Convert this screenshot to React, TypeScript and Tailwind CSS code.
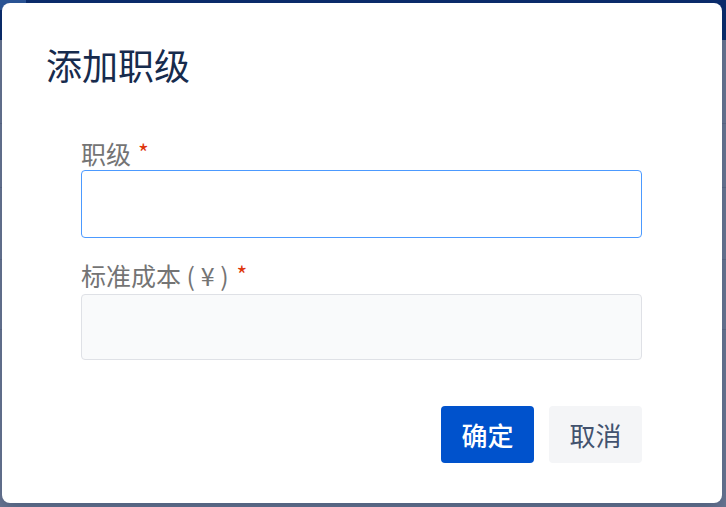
import React from "react";

const font = { fontFamily: '"Noto Sans CJK SC", "Noto Sans", sans-serif' };

export default function App() {
  return (
    <div className="relative h-[507px] w-[726px] overflow-hidden bg-[#6b7793]" style={font}>
      {/* page behind the overlay */}
      <div className="flex h-[40px] bg-[#0b2c6c]">
        <div className="h-[10px] w-[26px] bg-[#2b5596]" />
      </div>
      <div className="flex flex-col">
        <div className="h-[84px] border-b border-[#5f6b87]" />
        <div className="h-[64px] border-b border-[#5f6b87]" />
        <div className="h-[72px] border-b border-[#5f6b87]" />
        <div className="h-[70px] border-b border-[#5f6b87]" />
      </div>

      {/* modal */}
      <div className="absolute left-[2px] top-[3px] flex h-[500px] w-[720px] flex-col rounded-[8px] bg-white shadow-[0_8px_16px_rgba(9,30,66,0.25)]">
        <h1 className="ml-[44px] mt-[36px] text-[36px] font-normal leading-[50px] text-[#172b4d]">添加职级</h1>

        <form className="ml-[79px] mt-[48px] flex w-[561px] flex-col">
          <label className="flex items-start text-[25px] leading-[32px] text-[#747474]">
            职级
            <span className="ml-[7px] text-[23px] leading-[30px] text-[#de350b]">*</span>
          </label>
          <input
            className="mt-[1px] h-[68px] w-full rounded-[4px] border border-[#4c9aff] bg-white px-3 text-[20px] outline-none"
            autoFocus
          />

          <label className="mt-[21px] flex items-start whitespace-pre text-[25px] leading-[32px] text-[#747474]">
            {"标准成本 ( ¥ )"}
            <span className="ml-[8px] text-[23px] leading-[30px] text-[#de350b]">*</span>
          </label>
          <input className="mt-[3px] h-[66px] w-full rounded-[4px] border border-[#dfe1e6] bg-[#f9fafb] px-3 text-[20px] outline-none" />

          <div className="mt-[46px] flex justify-end gap-[15px]">
            <button
              type="button"
              className="h-[57px] w-[93px] rounded-[4px] bg-[#0052cc] text-[26px] font-medium text-white"
            >
              确定
            </button>
            <button
              type="button"
              className="h-[57px] w-[93px] rounded-[4px] bg-[#f4f5f7] text-[26px] text-[#42526e]"
            >
              取消
            </button>
          </div>
        </form>
      </div>
    </div>
  );
}
